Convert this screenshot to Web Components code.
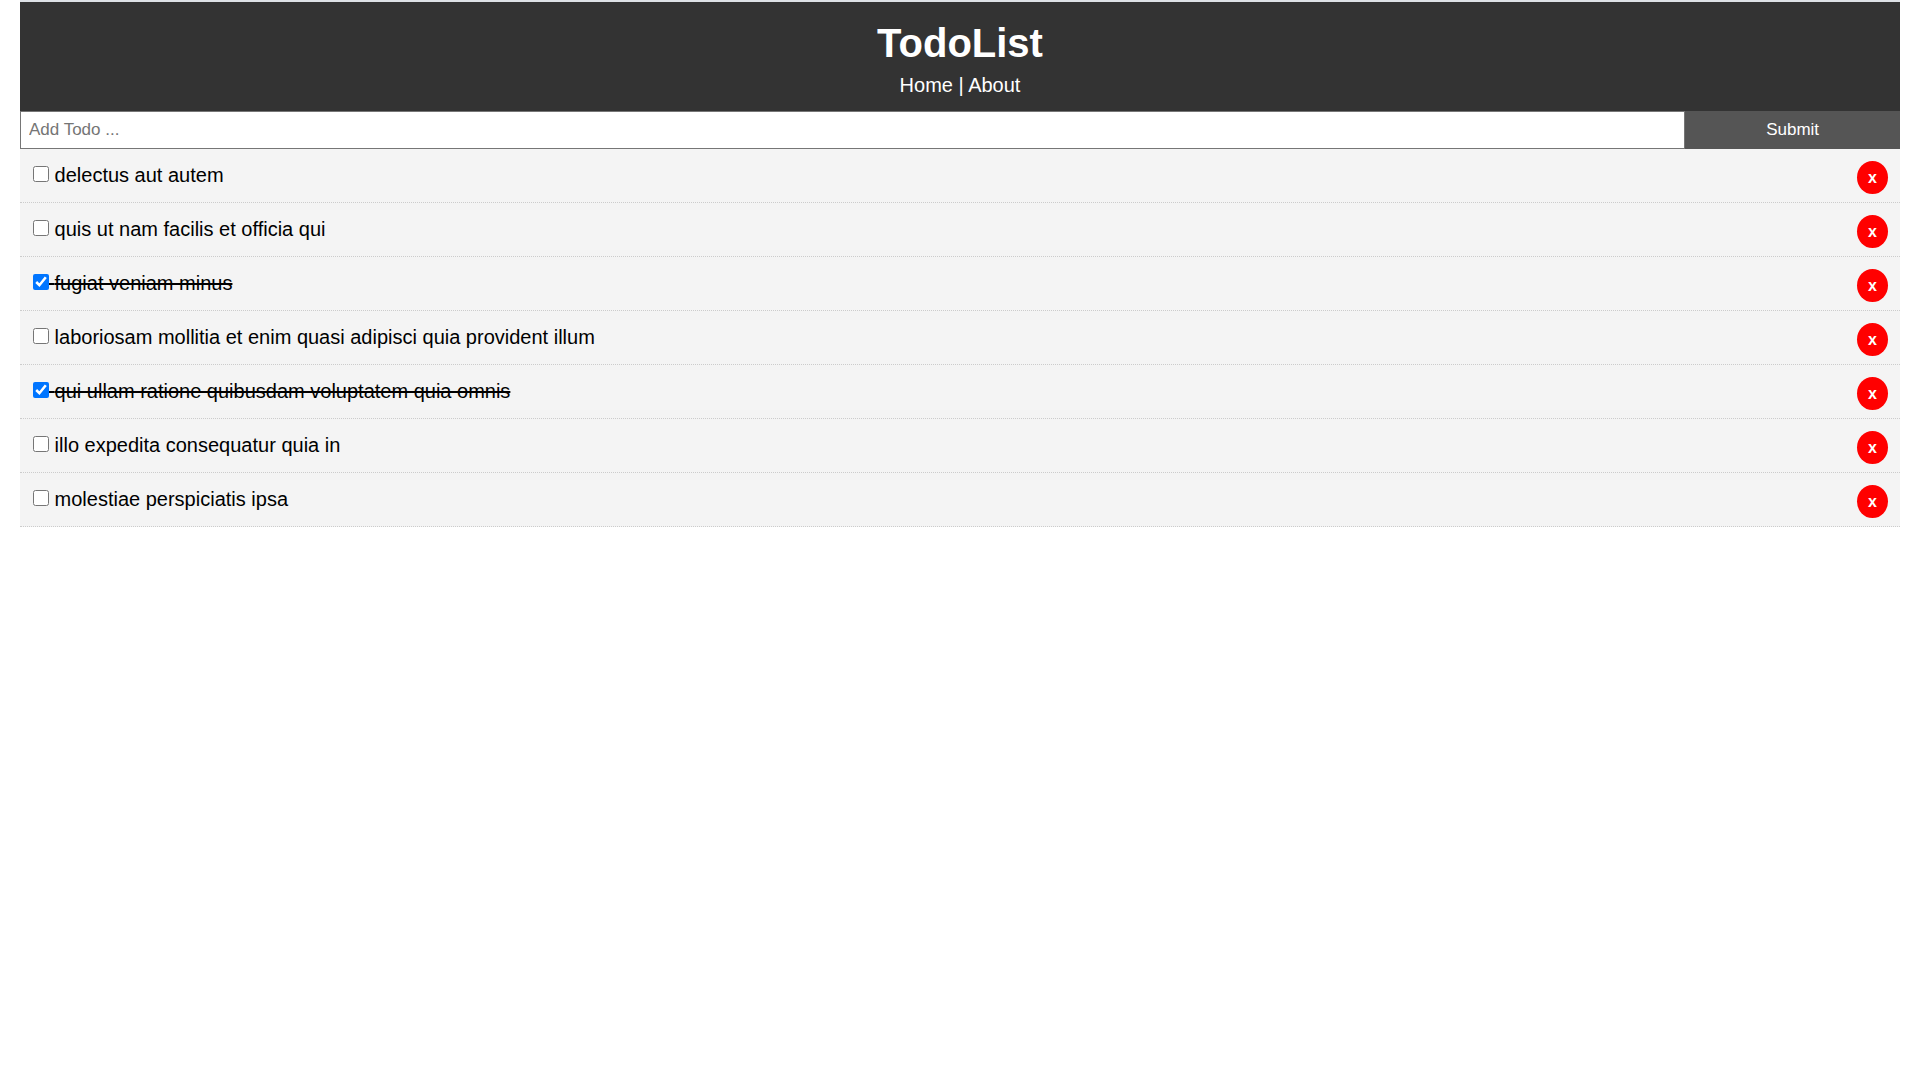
<!DOCTYPE html>
<html lang="en">
<head>
<meta charset="utf-8">
<title>TodoList</title>
<style>
  body { margin: 0; background: #fff; color: #000; font: 20px/28px "Liberation Sans", Arial, sans-serif; }
</style>
</head>
<body>
<todo-app></todo-app>

<script>
class TodoHeader extends HTMLElement {
  connectedCallback() {
    this.attachShadow({ mode: "open" }).innerHTML = `
      <style>
        :host { display: block; }
        header { background: #333; color: #fff; text-align: center; padding: 13px 12px 12px; }
        h1 { margin: 0; font-size: 40px; line-height: 56px; }
        nav { line-height: 28px; }
        a { color: #fff; text-decoration: none; }
      </style>
      <header>
        <h1><slot></slot></h1>
        <nav><a href="#home">Home</a> | <a href="#about">About</a></nav>
      </header>`;
  }
}

class TodoForm extends HTMLElement {
  connectedCallback() {
    this.attachShadow({ mode: "open" }).innerHTML = `
      <style>
        :host { display: block; }
        form { display: flex; height: 38px; }
        input, button { margin: 0; font: 17px "Liberation Sans", Arial, sans-serif; border-radius: 0; }
        input { flex: 10; min-width: 0; padding: 6px 8px; border: 1px solid #767676; background: #fff; color: #000; }
        input::placeholder { color: #757575; }
        button { flex: 1; padding: 8px 25px; border: 0; background: #555; color: #fff; cursor: pointer; }
      </style>
      <form>
        <input type="text" name="title" placeholder="Add Todo ..." aria-label="Add Todo">
        <button type="submit">Submit</button>
      </form>`;
    const form = this.shadowRoot.querySelector("form");
    const field = this.shadowRoot.querySelector("input");
    form.addEventListener("submit", (e) => {
      e.preventDefault();
      const title = field.value.trim();
      if (title) this.dispatchEvent(new CustomEvent("add-todo", { detail: title }));
      form.reset();
    });
  }
}

class TodoItem extends HTMLElement {
  connectedCallback() {
    this.attachShadow({ mode: "open" }).innerHTML = `
      <style>
        :host { display: flex; align-items: flex-start; justify-content: space-between;
                padding: 12px 12px 8px; background: #f4f4f4; border-bottom: 1px dotted #ccc; }
        p { margin: 0; line-height: 28px; }
        :host([done]) p { text-decoration: line-through 2px; }
        input { width: 16px; height: 16px; margin: 0 0 0 1px; }
        button { margin: 0; padding: 6px 11px; height: 33px; border: 0; border-radius: 50%;
                 background: #f00; color: #fff; font: bold 16px "Liberation Sans", Arial, sans-serif; cursor: pointer; }
      </style>
      <p><input type="checkbox" id="done"><label for="done"> <slot></slot></label></p>
      <button type="button" aria-label="Delete">x</button>`;
    const box = this.shadowRoot.querySelector("input");
    box.checked = this.hasAttribute("done");
    box.addEventListener("change", () => this.toggleAttribute("done", box.checked));
    this.shadowRoot.querySelector("button").addEventListener("click", () => this.remove());
  }
}

class TodoApp extends HTMLElement {
  connectedCallback() {
    this.attachShadow({ mode: "open" }).innerHTML = `
      <style>
        :host { display: block; margin: 0 20px; border-top: 2px solid #dee1e6; }
      </style>
      <todo-header>TodoList</todo-header>
      <todo-form></todo-form>
      <main>
        <todo-item>delectus aut autem</todo-item>
        <todo-item>quis ut nam facilis et officia qui</todo-item>
        <todo-item done>fugiat veniam minus</todo-item>
        <todo-item>laboriosam mollitia et enim quasi adipisci quia provident illum</todo-item>
        <todo-item done>qui ullam ratione quibusdam voluptatem quia omnis</todo-item>
        <todo-item>illo expedita consequatur quia in</todo-item>
        <todo-item>molestiae perspiciatis ipsa</todo-item>
      </main>`;
    const list = this.shadowRoot.querySelector("main");
    this.shadowRoot.querySelector("todo-form").addEventListener("add-todo", (e) => {
      const item = document.createElement("todo-item");
      item.textContent = e.detail;
      list.append(item);
    });
  }
}

customElements.define("todo-header", TodoHeader);
customElements.define("todo-form", TodoForm);
customElements.define("todo-item", TodoItem);
customElements.define("todo-app", TodoApp);
</script>
</body>
</html>
